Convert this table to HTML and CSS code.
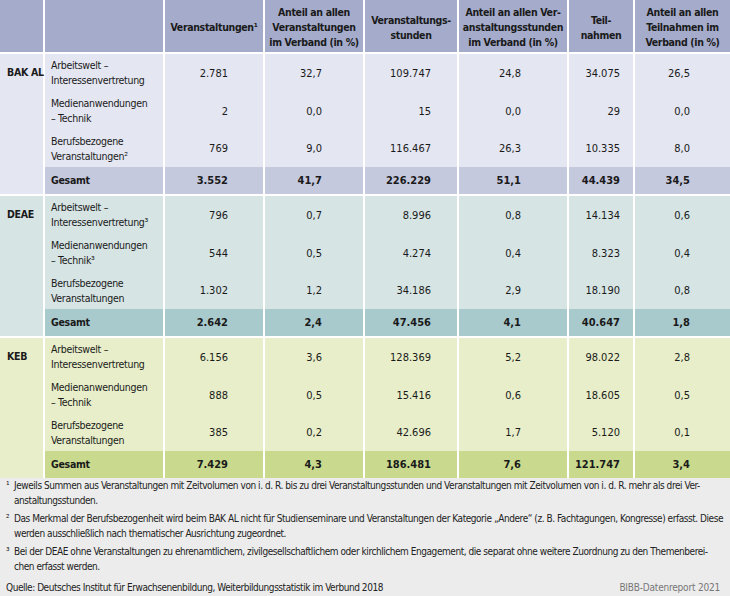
FILE: index.html
```html
<!DOCTYPE html>
<html lang="de">
<head>
<meta charset="utf-8">
<title>Veranstaltungen im Verband</title>
<link rel="stylesheet" href="styles.css">
</head>
<body>
<div class="page">
  <div class="tbl">
    <div class="grid head">
      <div class="cell"></div>
      <div class="cell"></div>
      <div class="cell hc">Veranstaltungen¹</div>
      <div class="cell hc">Anteil an allen<br>Veranstaltungen<br>im Verband (in %)</div>
      <div class="cell hc">Veranstaltungs-<br>stunden</div>
      <div class="cell hc">Anteil an allen Ver-<br>anstaltungsstunden<br>im Verband (in %)</div>
      <div class="cell hc">Teil-<br>nahmen</div>
      <div class="cell hc">Anteil an allen<br>Teilnahmen im<br>Verband (in %)</div>
    </div>

    <div class="grid group bak">
      <div class="cell label">BAK AL</div>
      <div class="cell cat">Arbeitswelt –<br>Interessenvertretung</div>
      <div class="cell n c3">2.781</div><div class="cell n c4">32,7</div><div class="cell n c5">109.747</div><div class="cell n c6">24,8</div><div class="cell n c7">34.075</div><div class="cell n c8">26,5</div>
      <div class="cell cat">Medienanwendungen<br>– Technik</div>
      <div class="cell n c3">2</div><div class="cell n c4">0,0</div><div class="cell n c5">15</div><div class="cell n c6">0,0</div><div class="cell n c7">29</div><div class="cell n c8">0,0</div>
      <div class="cell cat">Berufsbezogene<br>Veranstaltungen²</div>
      <div class="cell n c3">769</div><div class="cell n c4">9,0</div><div class="cell n c5">116.467</div><div class="cell n c6">26,3</div><div class="cell n c7">10.335</div><div class="cell n c8">8,0</div>
      <div class="cell cat tot">Gesamt</div>
      <div class="cell n tot c3">3.552</div><div class="cell n tot c4">41,7</div><div class="cell n tot c5">226.229</div><div class="cell n tot c6">51,1</div><div class="cell n tot c7">44.439</div><div class="cell n tot c8">34,5</div>
    </div>

    <div class="grid group deae">
      <div class="cell label">DEAE</div>
      <div class="cell cat">Arbeitswelt –<br>Interessenvertretung³</div>
      <div class="cell n c3">796</div><div class="cell n c4">0,7</div><div class="cell n c5">8.996</div><div class="cell n c6">0,8</div><div class="cell n c7">14.134</div><div class="cell n c8">0,6</div>
      <div class="cell cat">Medienanwendungen<br>– Technik³</div>
      <div class="cell n c3">544</div><div class="cell n c4">0,5</div><div class="cell n c5">4.274</div><div class="cell n c6">0,4</div><div class="cell n c7">8.323</div><div class="cell n c8">0,4</div>
      <div class="cell cat">Berufsbezogene<br>Veranstaltungen</div>
      <div class="cell n c3">1.302</div><div class="cell n c4">1,2</div><div class="cell n c5">34.186</div><div class="cell n c6">2,9</div><div class="cell n c7">18.190</div><div class="cell n c8">0,8</div>
      <div class="cell cat tot">Gesamt</div>
      <div class="cell n tot c3">2.642</div><div class="cell n tot c4">2,4</div><div class="cell n tot c5">47.456</div><div class="cell n tot c6">4,1</div><div class="cell n tot c7">40.647</div><div class="cell n tot c8">1,8</div>
    </div>

    <div class="grid group keb">
      <div class="cell label">KEB</div>
      <div class="cell cat">Arbeitswelt –<br>Interessenvertretung</div>
      <div class="cell n c3">6.156</div><div class="cell n c4">3,6</div><div class="cell n c5">128.369</div><div class="cell n c6">5,2</div><div class="cell n c7">98.022</div><div class="cell n c8">2,8</div>
      <div class="cell cat">Medienanwendungen<br>– Technik</div>
      <div class="cell n c3">888</div><div class="cell n c4">0,5</div><div class="cell n c5">15.416</div><div class="cell n c6">0,6</div><div class="cell n c7">18.605</div><div class="cell n c8">0,5</div>
      <div class="cell cat">Berufsbezogene<br>Veranstaltungen</div>
      <div class="cell n c3">385</div><div class="cell n c4">0,2</div><div class="cell n c5">42.696</div><div class="cell n c6">1,7</div><div class="cell n c7">5.120</div><div class="cell n c8">0,1</div>
      <div class="cell cat tot">Gesamt</div>
      <div class="cell n tot c3">7.429</div><div class="cell n tot c4">4,3</div><div class="cell n tot c5">186.481</div><div class="cell n tot c6">7,6</div><div class="cell n tot c7">121.747</div><div class="cell n tot c8">3,4</div>
    </div>
  </div>

  <div class="notes">
    <p class="fn"><span class="mark">¹</span>Jeweils Summen aus Veranstaltungen mit Zeitvolumen von i. d. R. bis zu drei Veranstaltungsstunden und Veranstaltungen mit Zeitvolumen von i. d. R. mehr als drei Ver-<br>anstaltungsstunden.</p>
    <p class="fn"><span class="mark">²</span>Das Merkmal der Berufsbezogenheit wird beim BAK AL nicht für Studienseminare und Veranstaltungen der Kategorie „Andere“ (z. B. Fachtagungen, Kongresse) erfasst. Diese<br>werden ausschließlich nach thematischer Ausrichtung zugeordnet.</p>
    <p class="fn"><span class="mark">³</span>Bei der DEAE ohne Veranstaltungen zu ehrenamtlichem, zivilgesellschaftlichem oder kirchlichem Engagement, die separat ohne weitere Zuordnung zu den Themenberei-<br>chen erfasst werden.</p>
    <div class="source">
      <span>Quelle: Deutsches Institut für Erwachsenenbildung, Weiterbildungsstatistik im Verbund 2018</span>
      <span class="brand">BIBB-Datenreport 2021</span>
    </div>
  </div>
</div>
</body>
</html>
```

FILE: styles.css
```css
* { box-sizing: border-box; }
html, body { margin: 0; padding: 0; background: #ececec; }
body {
  font-family: "DejaVu Sans Condensed", "DejaVu Sans", sans-serif;
  font-stretch: condensed;
  color: #1a1a1a;
}
.page { width: 730px; height: 596px; background: #ececec; overflow: hidden; }

.tbl {
  display: flex;
  flex-direction: column;
  gap: 2px;
  background: #ffffff;
}
.grid {
  display: grid;
  grid-template-columns: 43px 118px 98px 98px 92px 108px 64px 95px;
  column-gap: 2px;
  background: #ffffff;
}
.head { grid-template-rows: 52px; }
.head .cell { background: #a4abcb; }
.hc {
  font-weight: bold;
  font-size: 10.5px;
  letter-spacing: -0.35px;
  line-height: 15px;
  text-align: center;
  display: flex;
  align-items: center;
  justify-content: center;
  padding-top: 3px;
  white-space: nowrap;
}

.group { grid-template-rows: 38px 38px 37px 27px; }
.cell { font-size: 10.5px; line-height: 15px; }
.label {
  grid-row: 1 / span 4;
  font-weight: bold;
  letter-spacing: -0.3px;
  padding: 11px 0 0 7px;
  white-space: nowrap;
}
.cat {
  display: flex;
  align-items: center;
  padding-left: 6px;
  letter-spacing: -0.3px;
  white-space: nowrap;
}
.n {
  display: flex;
  align-items: center;
  justify-content: flex-end;
  font-size: 11px;
}
.tot { font-weight: bold; }
.c3 { padding-right: 35px; }
.c4 { padding-right: 41px; }
.c5 { padding-right: 26px; }
.c6 { padding-right: 46px; }
.c7 { padding-right: 13px; }
.c8 { padding-right: 40px; }

.bak .cell { background: #e4e6f1; }
.bak .tot { background: #c5c9de; }
.deae .cell { background: #d6e4e4; }
.deae .tot { background: #a9cacd; }
.keb .cell { background: #e7eec9; }
.keb .tot { background: #c9da8e; }

.notes {
  padding: 0 10px 0 14px;
  font-size: 10px;
  letter-spacing: -0.45px;
  line-height: 15px;
  color: #222;
}
.fn {
  margin: 0 0 3px 0;
  position: relative;
  white-space: nowrap;
}
.mark {
  position: absolute;
  left: -8px;
  top: 0;
}
.source {
  display: flex;
  justify-content: space-between;
  margin-top: 6px;
  margin-left: -8px;
  white-space: nowrap;
}
.brand { color: #777; letter-spacing: -0.2px; }
```
